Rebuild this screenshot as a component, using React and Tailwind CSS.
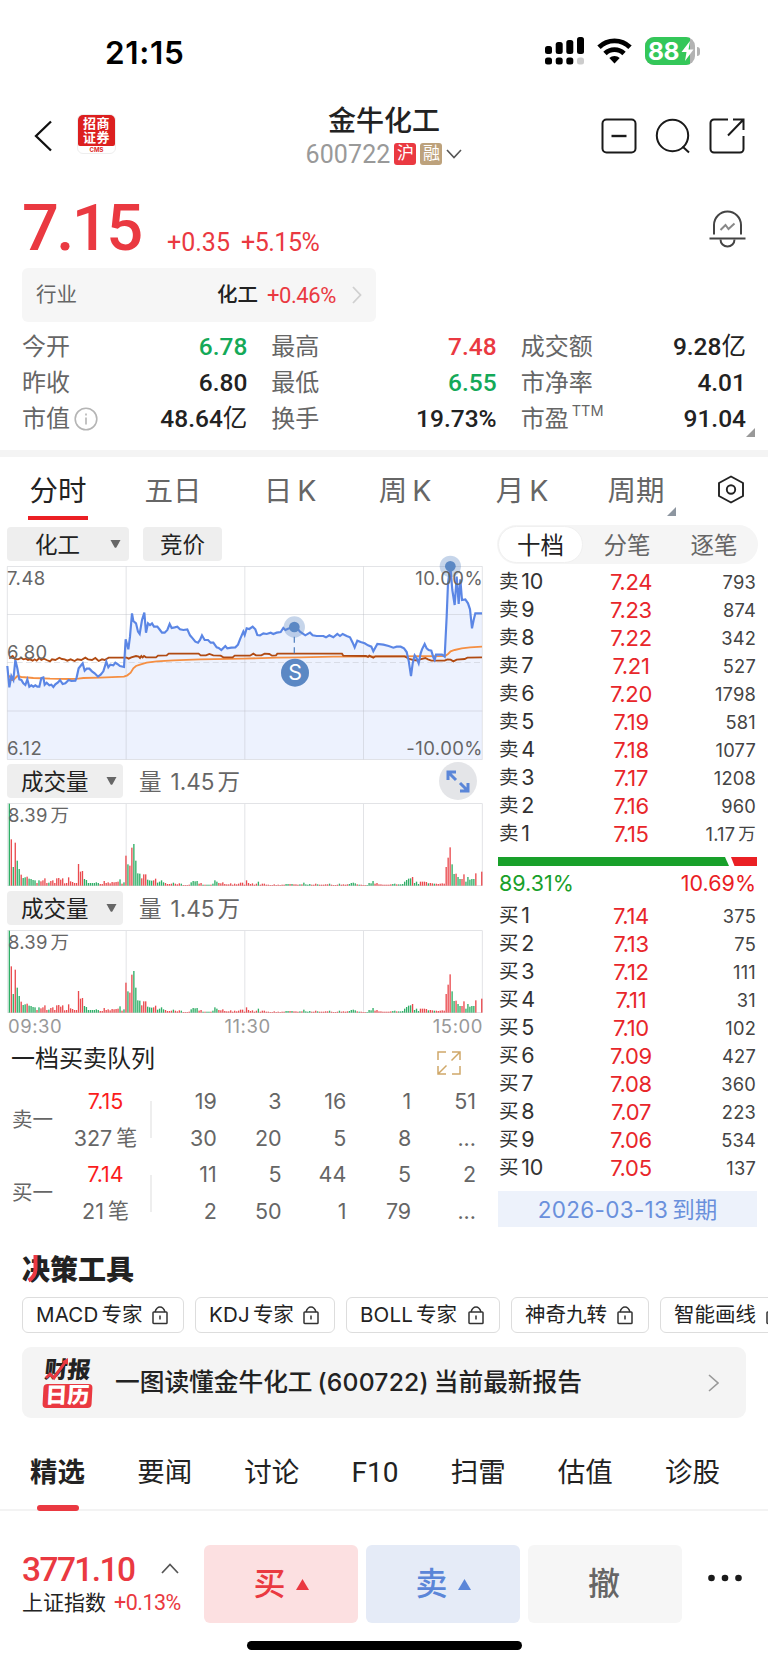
import { Fragment } from "react";

const sellOrders = [
  ["10", "7.24", "793"],
  ["9", "7.23", "874"],
  ["8", "7.22", "342"],
  ["7", "7.21", "527"],
  ["6", "7.20", "1798"],
  ["5", "7.19", "581"],
  ["4", "7.18", "1077"],
  ["3", "7.17", "1208"],
  ["2", "7.16", "960"],
  ["1", "7.15", "1.17", "万"],
];

const buyOrders = [
  ["1", "7.14", "375"],
  ["2", "7.13", "75"],
  ["3", "7.12", "111"],
  ["4", "7.11", "31"],
  ["5", "7.10", "102"],
  ["6", "7.09", "427"],
  ["7", "7.08", "360"],
  ["8", "7.07", "223"],
  ["9", "7.06", "534"],
  ["10", "7.05", "137"],
];

const pricePoints =
  "22,648 28,712 34,678 40,690 46,630 52,655 58,688 64,690 70,700 76,705 82,688 88,710 94,706 100,710 106,706 112,710 118,710 124,684 130,682 134,704 140,698 148,706 154,704 160,711 166,703 174,697 180,690 188,702 196,700 206,690 214,693 226,692 230,682 236,655 248,640 254,662 260,656 268,656 276,664 284,670 294,680 302,674 310,664 319,635 325,652 331,644 340,646 346,638 352,642 360,648 372,651 377,568 385,598 390,560 396,490 400,513 408,520 414,545 419,552 426,510 433,488 438,548 444,520 450,525 456,520 462,530 472,530 480,540 486,548 494,548 502,540 509,522 515,534 524,532 532,530 540,538 550,540 562,538 570,556 578,565 586,575 594,578 600,570 606,556 614,570 624,570 632,578 640,578 650,592 656,594 664,600 676,588 682,595 694,593 706,592 714,584 720,568 730,545 734,555 740,535 748,537 758,530 766,538 772,555 780,556 790,550 800,552 812,548 820,552 830,548 842,546 850,534 856,540 864,536 882,530 892,535 900,545 916,556 930,548 938,556 950,558 970,558 978,562 988,556 1000,562 1012,552 1020,558 1028,552 1040,558 1050,562 1058,578 1064,592 1072,572 1082,576 1094,580 1104,586 1114,590 1120,604 1132,582 1150,584 1166,588 1180,593 1190,590 1202,590 1212,595 1220,606 1226,632 1233,678 1238,640 1244,616 1250,625 1256,640 1262,610 1266,598 1274,582 1280,595 1286,600 1294,602 1300,622 1304,630 1308,614 1326,614 1334,620 1340,500 1344,400 1351,348 1357,420 1364,465 1370,380 1376,462 1381,388 1386,450 1396,448 1404,460 1410,478 1416,535 1421,510 1426,490 1446,490";

const avgPoints =
  "28,676 34,690 40,690 52,678 64,681 100,684 150,686 210,687 235,686 250,684 300,683 372,680 382,676 392,668 400,655 408,648 420,644 440,638 470,634 520,631 600,628 730,626 830,623 900,622 1000,620 1200,619 1335,618 1344,612 1352,604 1364,600 1385,595 1410,592 1446,590";

const industryPoints =
  "28,626 34,620 38,618 44,627 54,628 64,624 70,628 78,626 84,630 90,628 98,632 104,628 110,632 118,624 124,630 132,626 140,630 150,634 156,628 166,630 178,623 186,627 194,628 202,632 212,628 224,633 232,628 244,630 256,623 264,628 276,630 286,624 296,633 306,628 314,630 326,623 380,623 386,626 394,622 408,618 416,620 420,624 424,618 428,622 432,618 438,622 468,622 474,617 500,616 506,611 596,611 602,616 618,616 628,612 640,616 662,617 670,622 698,622 704,617 750,617 760,611 768,616 784,616 794,611 808,612 816,617 828,616 832,611 1026,611 1030,617 1098,618 1104,621 1108,617 1120,623 1126,619 1214,619 1228,627 1240,630 1254,632 1260,628 1276,624 1284,628 1294,632 1334,632 1342,628 1352,629 1360,634 1370,629 1394,627 1402,623 1446,622";

// one bar per minute, negative = falling minute
const volumes = [
  -246, 139, -56, 129, -75, -50, 33, -23, -25, 27, -21, -20, -17, -16, 8, -16, 13, 16, 22, 8,
  -9, 14, 16, 8, 22, 23, 18, 22, 7, 8, 25, 13, 11, 8, 8, 65, 42, 44, -20, -17,
  -8, -8, -8, -8, -10, -8, 5, 5, 14, 8, 10, 7, 11, 10, 11, 12, -19, 6, -10, 90,
  -64, 60, 114, -125, -75, -37, -36, 22, 34, 34, -18, -16, -15, 16, 21, -9, -12, -16, -10, 8,
  5, 5, 6, -9, 6, 4, 7, -6, 2, 2, 2, 3, -10, -14, -13, -14, 6, 8, -3, 3,
  -3, -3, 3, -6, -16, -12, 8, 7, 10, 5, 4, 4, 7, 3, 6, 4, 6, 9, 9, 3,
  16, 8, 5, 7, 3, 6, -12, 3, 6, 6, 3, 3, 2, 2, 4, 2, 3, 2, 3, 3,
  -5, -5, 5, -5, 4, 4, 3, -4, 4, -9, -4, -3, -5, 3, 3, 6, -4, 3, 3, 3,
  4, 4, -6, 3, 2, 2, 3, -6, 3, 4, 3, 4, -5, -8, -9, -7, 4, -3, 3, 2,
  2, -2, -8, -7, -14, 6, 8, 4, 4, 3, 3, 3, 3, 4, -5, -6, 4, -4, -4, -5,
  -12, -17, -21, -22, 26, -8, -12, -5, 12, 12, 12, 11, -7, 8, 7, -6, 6, 5, 6, 7,
  6, 56, 84, 115, -64, -35, 36, -26, -20, 20, 34, -12, -26, -18, -20, -20, 37, 0, 0, 42,
];

const Triangle = ({ className }) => (
  <svg viewBox="0 0 10 8" className={className} fill="currentColor">
    <path d="M0 0h10L6 7.2q-1 1-2 0z" />
  </svg>
);

const Corner = ({ className }) => (
  <svg viewBox="0 0 9 9" className={className} fill="currentColor">
    <path d="M9 0v9H0z" />
  </svg>
);

const Lock = () => (
  <svg viewBox="0 0 16 19" className="w-4 h-[19px] shrink-0" fill="none" stroke="#333" strokeWidth="1.5">
    <rect x="1" y="6" width="14" height="11.500" rx="0.800" />
    <path d="M3 6C4 2.800 5.800 1 8 1s4 1.800 5 5M8 9.500v4" />
  </svg>
);

function StatusBar() {
  return (
    <div className="h-[102px] flex items-center justify-between pl-[105px] pr-[68px]">
      <span className="text-[31.500px] font-semibold text-black tracking-[0.700px] leading-none mt-[3px]">21:15</span>
      <div className="flex items-center gap-[13px]">
        <svg width="39" height="28" viewBox="0 0 39 28">
          <rect x="0" y="9" width="7" height="8" rx="2.500" />
          <rect x="10.700" y="5" width="7" height="12" rx="2.500" />
          <rect x="21.300" y="3" width="7" height="14" rx="2.500" />
          <rect x="32" y="0" width="7" height="17" rx="2.500" />
          <rect x="0" y="20.500" width="7" height="7" rx="2.500" />
          <rect x="10.700" y="20.500" width="7" height="7" rx="2.500" />
          <rect x="21.300" y="20.500" width="7" height="7" rx="2.500" />
          <rect x="32" y="20.500" width="7" height="7" rx="2.500" fill="#ccc" />
        </svg>
        <svg width="35" height="26" viewBox="0 0 35 26" fill="none" stroke="#000" strokeWidth="4.800">
          <path d="M2 9.200a22 22 0 0 1 31 0" />
          <path d="M8 15.500a13.500 13.500 0 0 1 19 0" />
          <path d="M17.500 25.500l-5.200-5.400a7.500 7.500 0 0 1 10.400 0z" fill="#000" stroke="none" />
        </svg>
        <div className="flex items-center gap-[2px]">
          <div className="relative w-[50px] h-[28px] rounded-[9px] overflow-hidden bg-[#b3b3b3]">
            <div className="w-[45px] h-full bg-[#34c759] text-white font-bold text-[24.500px] leading-[28px] pl-[3px] tracking-[-0.500px]">88</div>
            <svg className="absolute right-px top-[4px]" width="13" height="20" viewBox="0 0 13 20" fill="#fff">
              <path d="M9 0L0.500 11H5.500L4 20l8.500-11.500H7.500z" />
            </svg>
          </div>
          <div className="w-[3px] h-[9px] rounded-r-full bg-[#b3b3b3]"></div>
        </div>
      </div>
    </div>
  );
}

function Header() {
  return (
    <div className="h-[68px] flex items-center pl-[34px] pr-[23px] text-[#222]">
      <div className="flex items-center gap-[24px] w-[240px]">
        <svg width="19" height="32" viewBox="0 0 19 32" fill="none" stroke="#111" strokeWidth="2.300">
          <path d="M17 1.500L2 16l15 14.500" />
        </svg>
        <div className="w-[39px] h-[40px] -mt-1 rounded-[6px] border border-[#eee] text-center">
          <div className="h-[31px] bg-[#dc1f1f] rounded-t-[5px] rounded-b-[2px] text-white text-[13px] font-bold font-['Noto_Sans_CJK_SC',sans-serif] pt-px">
            <div className="h-[14px] leading-[14px] tracking-[0.500px]">招商</div>
            <div className="h-[14px] leading-[14px] tracking-[0.500px]">证券</div>
          </div>
          <div className="text-[6px] leading-[7px] font-bold text-[#dc1f1f]">CMS</div>
        </div>
      </div>

      <div className="w-[220px] flex flex-col items-center">
        <div className="text-[28px] leading-[34px] font-medium mt-[2px]">金牛化工</div>
        <div className="flex items-center h-[32px] gap-1">
          <span className="font-['Roboto',sans-serif] text-[25px] text-[#999] leading-none tracking-[0.100px]">600722</span>
          <span className="w-[22px] h-[22px] rounded-[3px] bg-[#ea3941] text-white text-[17px] leading-[21px] text-center">沪</span>
          <span className="w-[22px] h-[22px] rounded-[3px] bg-[#bda27c] text-white text-[17px] leading-[21px] text-center">融</span>
          <svg width="16" height="10" viewBox="0 0 16 10" fill="none" stroke="#555" strokeWidth="1.600">
            <path d="M1 1l7 7.500L15 1" />
          </svg>
        </div>
      </div>

      <div className="ml-auto flex items-center gap-[18px]">
        <svg width="36" height="36" viewBox="0 0 36 36" fill="none" stroke="#1a1a1a" strokeWidth="2">
          <rect x="1.500" y="1.500" width="33" height="33" rx="4" />
          <path d="M10.500 18h15" strokeWidth="2.400" />
        </svg>
        <svg width="36" height="36" viewBox="0 0 36 36" fill="none" stroke="#1a1a1a" strokeWidth="2">
          <circle cx="17.500" cy="17.500" r="15.700" />
          <path d="M27.500 28.500l6.500 6" />
        </svg>
        <svg width="36" height="36" viewBox="0 0 36 36" fill="none" stroke="#1a1a1a" strokeWidth="2">
          <path d="M19 1.500H5a3.500 3.500 0 0 0-3.500 3.500v26A3.500 3.500 0 0 0 5 34.500h26a3.500 3.500 0 0 0 3.500-3.500V18" />
          <path d="M24 1.500h10.500V12M34 2L19 17.500" />
        </svg>
      </div>
    </div>
  );
}

function Stat({ label, value, unit, color = "text-[#222]", children }) {
  return (
    <div className="flex items-center justify-between h-9">
      <span className="flex items-center gap-1 text-[24px] text-[#666]">
        {label}
        {children}
      </span>
      <span className={`font-['Roboto','Noto_Sans_CJK_SC',sans-serif] font-medium text-[24.500px] ${color}`}>
        {value}
        {unit && <span className="font-normal">{unit}</span>}
      </span>
    </div>
  );
}

function Quote() {
  return (
    <div className="px-[22px]">
      <div className="h-[98px] flex items-start font-['Roboto',sans-serif] text-[#ea3941]">
        <span className="text-[65px] font-medium leading-none mt-[26px] w-[145px] tracking-[-2.600px]">7.15</span>
        <span className="text-[25px] leading-none mt-[60px] w-[74px]">+0.35</span>
        <span className="text-[25px] leading-none mt-[60px] tracking-[-0.500px]">+5.15%</span>
        <svg className="ml-auto mt-[40px]" width="37" height="38" viewBox="0 0 37 38" fill="none" stroke="#444" strokeWidth="2">
          <path d="M5 24.500V15a13.500 13.500 0 0 1 27 0v9.500M0.500 28.500h36" />
          <path d="M11.500 29.500a7 7 0 0 0 14 0" />
          <path d="M11.500 20l5-5 3 4 6-5.500" stroke="#888" />
        </svg>
      </div>

      <div className="w-[354px] h-[54px] rounded-[6px] bg-[#f6f6f6] flex items-center pl-[14px] pr-[14px]">
        <span className="text-[20.500px] text-[#666] mt-px">行业</span>
        <span className="ml-auto text-[20.500px] font-medium text-[#222] mt-px">化工</span>
        <span className="ml-[9px] font-['Roboto',sans-serif] text-[22px] text-[#ea3941] tracking-[-0.400px]">+0.46%</span>
        <svg className="ml-[16px]" width="10" height="18" viewBox="0 0 10 18" fill="none" stroke="#d0d0d0" strokeWidth="1.800">
          <path d="M1 1l7.500 8L1 17" />
        </svg>
      </div>

      <div className="relative mt-[7px] grid grid-cols-3 gap-x-6">
        <Stat label="今开" value="6.78" color="text-[#14a958]" />
        <Stat label="最高" value="7.48" color="text-[#ea3941]" />
        <Stat label="成交额" value="9.28" unit="亿" />
        <Stat label="昨收" value="6.80" />
        <Stat label="最低" value="6.55" color="text-[#14a958]" />
        <Stat label="市净率" value="4.01" />
        <Stat label="市值" value="48.64" unit="亿">
          <svg width="24" height="24" viewBox="0 0 24 24" fill="none" stroke="#b5b5b5" strokeWidth="1.600">
            <circle cx="12" cy="12" r="10.800" />
            <path d="M12 10.500v7M12 6.500v2" />
          </svg>
        </Stat>
        <Stat label="换手" value="19.73%" />
        <Stat label="市盈" value="91.04">
          <span className="text-[14.500px] -mt-4 -ml-px">TTM</span>
        </Stat>
        <Corner className="absolute -right-[9px] bottom-0 w-[9px] h-[9px] text-[#999]" />
      </div>
    </div>
  );
}

function PeriodTabs() {
  return (
    <div className="h-[66px] flex items-center text-[28.500px] text-[#666] pt-[2px]">
      <div className="relative w-[116px] h-full flex items-center justify-center text-[#222]">
        <span>分时</span>
        <div className="absolute bottom-[3px] left-[28px] w-[60px] h-1 bg-[#eb1f24]"></div>
      </div>
      <div className="w-[114px] text-center">五日</div>
      <div className="w-[120px] flex justify-center gap-[5px]">日<span>K</span></div>
      <div className="w-[110px] flex justify-center gap-[5px]">周<span>K</span></div>
      <div className="w-[124px] flex justify-center gap-[5px]">月<span>K</span></div>
      <div className="relative w-[104px] text-center">
        周期
        <Corner className="absolute right-[12px] -bottom-[4px] w-[9px] h-[9px] text-[#8d96a0]" />
      </div>
      <svg className="ml-[29px] -mt-[3px]" width="28" height="29" viewBox="0 0 28 29" fill="none" stroke="#222" strokeWidth="1.900" strokeLinejoin="round">
        <path d="M14 1.500l12 6.500v13L14 27.500 2 21V8z" />
        <circle cx="14" cy="14.500" r="4.200" />
      </svg>
    </div>
  );
}

function PriceChart() {
  return (
    <div className="relative mt-[5px] w-[476px] h-[194px] text-[18.500px] text-[#666]">
      <svg width="476" height="194" viewBox="21 348 1428 582" className="overflow-visible block" fill="none">
        <path d={`M22,928 L${pricePoints} L1446,928z`} fill="#edf2fe" />
        <g stroke="#b8bcc4" strokeOpacity="0.400" strokeWidth="3">
          <path d="M22 349.500h1425v579H22zM378.500 350v578M734.500 350v578M1090.500 350v578" />
          <path d="M22 493.500h1425M22 783h1425" />
          <path d="M22 637.500h1425" strokeDasharray="18 10" />
        </g>
        <polyline points={avgPoints} stroke="#f58f43" strokeWidth="5.500" />
        <polyline points={industryPoints} stroke="#b04a12" strokeWidth="5.500" />
        <polyline points={pricePoints} stroke="#5b86e5" strokeWidth="6.500" />
        <path d="M883 560v55" stroke="#5b88c4" strokeWidth="4" strokeDasharray="18 14" />
        <circle cx="883" cy="531" r="32" fill="#5b88c4" fillOpacity="0.350" />
        <circle cx="883" cy="531" r="16" fill="#5b88c4" />
        <circle cx="1351" cy="349" r="32" fill="#5b88c4" fillOpacity="0.350" />
        <circle cx="1351" cy="349" r="16" fill="#5b88c4" />
        <circle cx="885" cy="668" r="42" fill="#5b88c4" />
        <text x="885" y="690" textAnchor="middle" fontSize="64" fontWeight="400" fill="#fff">S</text>
      </svg>
      <div className="absolute inset-0 leading-[22px] tracking-[0.450px]">
        <div className="absolute left-0 top-px">7.48</div>
        <div className="absolute right-0 top-px">10.00%</div>
        <div className="absolute left-0 top-[75px]">6.80</div>
        <div className="absolute left-0 bottom-px">6.12</div>
        <div className="absolute right-0 bottom-px">-10.00%</div>
      </div>
    </div>
  );
}

function VolumeChart({ expand }) {
  return (
    <>
      <div className="h-[34px] flex items-center text-[22.500px] mt-1">
        <div className="w-[116px] h-full rounded-[4px] bg-[#eee] text-[#222] flex items-center pl-[14px] pt-px">
          成交量
          <Triangle className="ml-[17px] w-[11px] h-2 text-[#666] -mt-px" />
        </div>
        <span className="ml-[16px] mt-px text-[#666]">量</span>
        <span className="ml-[9px] mt-px flex gap-[3px] text-[#666]">1.45<span>万</span></span>
        {expand && (
          <svg className="ml-auto mr-[13px]" width="38" height="38" viewBox="0 0 38 38">
            <circle cx="19" cy="19" r="19" fill="#e4e5e8" />
            <g fill="none" stroke="#5b86d8" strokeWidth="3">
              <path d="M9 18V10h8M10 11l7 7M29 21v8h-8M28 28l-7-7" />
            </g>
          </svg>
        )}
      </div>
      <div className="relative mt-[5px] w-[476px] h-[83px]">
        <svg width="476" height="83" viewBox="21 160 1428 249" className="block" fill="none">
          <path d="M22 161.500h1425v246H22zM378.500 161v246M734.500 161v246M1090.500 161v246" stroke="#e2e3e6" strokeWidth="3" />
          {volumes.map((v, i) => (
            <rect
              key={i}
              x={26 + i * 5.93}
              y={408 - Math.abs(v)}
              width="4"
              height={Math.abs(v)}
              fill={v < 0 ? "#2fae66" : "#ea4a4e"}
            />
          ))}
        </svg>
        <div className="absolute left-px top-px flex gap-[3px] text-[18.500px] leading-[22px] text-[#666] tracking-[0.200px]">
          8.39<span>万</span>
        </div>
      </div>
    </>
  );
}

function Queue() {
  const groups = [
    { name: "卖一", price: "7.15", count: "327", rows: [["19", "3", "16", "1", "51"], ["30", "20", "5", "8", "..."]] },
    { name: "买一", price: "7.14", count: "21", rows: [["11", "5", "44", "5", "2"], ["2", "50", "1", "79", "..."]] },
  ];

  return (
    <div className="text-[21.500px] text-[#666]">
      <div className="h-[43px] flex items-center pl-1 pr-[29px] pb-[6px] justify-between">
        <span className="text-[24px] text-[#222] pt-px">一档买卖队列</span>
        <svg className="mt-[9px]" width="24" height="24" viewBox="0 0 24 24" fill="none" stroke="#d0a869" strokeWidth="1.500">
          <path d="M1 9V1h8M15 1h8v8M22.500 1.500l-8 8M1 15v8h8M1.500 22.500l8-8M23 15v8h-8" />
        </svg>
      </div>
      {groups.map((g) => (
        <div key={g.name} className="flex h-[73.500px] items-center">
          <div className="w-[54px] pl-[5px] pt-px text-[20.500px]">{g.name}</div>
          <div className="w-[89px] text-center leading-[36.800px]">
            <div className="text-[#fb1c1c]">{g.price}</div>
            <div className="flex justify-center gap-1">{g.count}<span className="text-[21px]">笔</span></div>
          </div>
          <div className="w-[2px] h-[37px] bg-[#eee]"></div>
          <div className="grid grid-cols-5 w-[324px] leading-[36.800px] text-right">
            {g.rows.map((row, i) => (
              <Fragment key={i}>
                {row.map((n, j) => (
                  <div key={j}>{n}</div>
                ))}
              </Fragment>
            ))}
          </div>
        </div>
      ))}
    </div>
  );
}

function Orders({ side, orders }) {
  return orders.map(([level, price, volume, unit]) => (
    <div key={side + level} className="grid grid-cols-[84px_96px_1fr] h-7 items-center px-[1px] leading-none">
      <div className="flex items-center gap-[3px] text-[21.500px] tracking-[-0.300px] text-[#333]">
        <span className="text-[19.500px]">{side}</span>
        {level}
      </div>
      <div className="text-center text-[22px] tracking-[-0.300px] text-[#e8262a]">{price}</div>
      <div className="flex justify-end gap-[3px] text-[18.300px] tracking-[0.200px] text-[#444]">
        {volume}
        {unit && <span className="text-[17.500px]">{unit}</span>}
      </div>
    </div>
  ));
}

function OrderBook() {
  return (
    <div className="w-[261px] ml-[7px] pt-[2px]">
      <div className="h-[39px] rounded-full bg-[#f5f5f5] p-[1px] flex text-[23.500px] leading-[39px] text-[#666] text-center">
        <div className="w-[85px] rounded-full bg-white text-[#222] border border-[#f0f0f0] leading-[37px]">十档</div>
        <div className="w-[88px]">分笔</div>
        <div className="w-[86px]">逐笔</div>
      </div>
      <div className="px-[1px]">
        <div className="pt-1">
          <Orders side="卖" orders={sellOrders} />
        </div>
        <svg className="mt-[9px] block" width="259" height="9" viewBox="0 0 259 9">
          <path d="M0 0h227l4 9H0z" fill="#18a02a" />
          <path d="M233 0h26v9h-22.500z" fill="#ea2024" />
        </svg>
        <div className="h-[36px] flex justify-between px-px pt-[3px] text-[21.500px] leading-[28px]">
          <span className="text-[#18a02a]">89.31%</span>
          <span className="text-[#ea2024]">10.69%</span>
        </div>
        <Orders side="买" orders={buyOrders} />
        <div className="mt-[9px] h-9 bg-[#edf2fb] flex justify-center gap-1 text-[22.500px] leading-[37px] text-[#6a90dc] tracking-[0.300px]">
          2026-03-13<span className="tracking-normal">到期</span>
        </div>
      </div>
    </div>
  );
}

function Tools() {
  const tools = [
    ["MACD", "专家", "w-[162px]"],
    ["KDJ", "专家", "w-[140px]"],
    ["BOLL", "专家", "w-[154px]"],
    ["", "神奇九转", "w-[138px]"],
    ["", "智能画线", "w-[138px]"],
  ];

  return (
    <div className="pl-[22px]">
      <div className="relative h-[57px] pt-[13px] text-[28px] leading-[34px] font-black text-[#222]">
        决策工具
        <svg className="absolute left-[5px] top-[15px]" width="12" height="28" viewBox="0 0 12 28" fill="none" stroke="#ea3941" strokeWidth="4">
          <path d="M8.500 0v13q0 9-7 12.500" />
        </svg>
      </div>
      <div className="flex gap-[11px]">
        {tools.map(([code, name, width]) => (
          <div
            key={code + name}
            className={`${width} shrink-0 h-[36px] border-[1.500px] border-[#ddd] rounded-[6px] pl-[13px] pr-[15px] flex items-center text-[20.500px] text-[#222] whitespace-nowrap`}
          >
            {code && <span className="mr-[3px] tracking-[0.200px]">{code}</span>}
            <span className="mr-auto">{name}</span>
            <Lock />
          </div>
        ))}
      </div>
      <div className="mt-[14px] w-[724px] h-[71px] rounded-[9px] bg-[#f4f4f4] flex items-center pl-[21px] pr-[27px]">
        <div className="relative w-[49px] text-center leading-none font-black">
          <div className="text-[23px] h-[26px] leading-[24px] -skew-x-6 text-[#222]">财报</div>
          <div className="h-[24px] rounded-[4px] bg-[#ea3941] text-white text-[22px] leading-[23px] -skew-x-3">日历</div>
          <svg className="absolute left-[2px] top-0" width="26" height="24" viewBox="0 0 26 24" fill="none" stroke="#ea3941" strokeWidth="3">
            <path d="M1 20l4-4 4 4L21 3" />
            <path d="M17 3.500l6-3.500v7z" fill="#ea3941" stroke="none" />
          </svg>
        </div>
        <span className="ml-[23px] mt-px flex gap-[5px] text-[24.700px] font-medium text-[#222]">
          一图读懂金牛化工<span className="tracking-[0.200px]">(600722)</span><span>当前最新报告</span>
        </span>
        <svg className="ml-auto" width="11" height="18" viewBox="0 0 11 18" fill="none" stroke="#999" strokeWidth="1.600">
          <path d="M1 1l9 8-9 8" />
        </svg>
      </div>
    </div>
  );
}

function Footer() {
  return (
    <>
      <div className="relative h-[93px] border-b-2 border-[#f3f3f3] flex items-center justify-between pl-[30px] pr-[48px] pt-[19px] text-[27.500px] text-[#222]">
        <span className="font-bold">精选</span>
        <span>要闻</span>
        <span>讨论</span>
        <span className="font-['Roboto',sans-serif] text-[28px]">F10</span>
        <span>扫雷</span>
        <span>估值</span>
        <span>诊股</span>
        <div className="absolute left-[37px] -bottom-[2px] w-[42px] h-[6px] rounded-full bg-[#ea3941]"></div>
      </div>

      <div className="pt-[34px] flex gap-2 pl-[22px]">
        <div className="w-[174px] h-[78px] pt-[7px]">
          <div className="flex items-center h-[36px]">
            <span className="w-[139px] font-['Roboto',sans-serif] font-medium text-[33.500px] tracking-[-1.600px] text-[#ea3941]">3771.10</span>
            <svg className="-mt-[3px]" width="18" height="11" viewBox="0 0 18 11" fill="none" stroke="#555" strokeWidth="1.700">
              <path d="M1 10l8-8.500 8 8.500" />
            </svg>
          </div>
          <div className="flex items-center gap-[8px] h-[30px] text-[21px] text-[#222]">
            上证指数
            <span className="font-['Roboto',sans-serif] text-[21.500px] tracking-[-0.500px] text-[#ea3941]">+0.13%</span>
          </div>
        </div>
        <div className="w-[154px] h-[78px] rounded-[6px] bg-[#fce0e1] text-[#ea3941] flex items-center justify-center gap-[10px] text-[32px] font-medium">
          买
          <svg width="13" height="11" viewBox="0 0 13 11" fill="currentColor"><path d="M6.500 0L13 11H0z" /></svg>
        </div>
        <div className="w-[154px] h-[78px] rounded-[6px] bg-[#e5ebf7] text-[#5b86d8] flex items-center justify-center gap-[10px] text-[32px] font-medium">
          卖
          <svg width="13" height="11" viewBox="0 0 13 11" fill="currentColor"><path d="M6.500 0L13 11H0z" /></svg>
        </div>
        <div className="w-[154px] h-[78px] rounded-[6px] bg-[#f6f6f6] text-[#666] flex items-center justify-center text-[32px] font-medium pr-[2px]">撤</div>
        <svg className="ml-[18px] mt-[29px]" width="34" height="8" viewBox="0 0 34 8" fill="#1a1a1a">
          <circle cx="3.500" cy="4" r="3.300" />
          <circle cx="17" cy="4" r="3.300" />
          <circle cx="30.500" cy="4" r="3.300" />
        </svg>
      </div>
      <div className="mt-[18px] mx-auto w-[275px] h-[9px] rounded-full bg-black"></div>
    </>
  );
}

function App() {
  return (
    <div className="w-[768px] h-[1665px] overflow-hidden bg-white font-['Inter','Noto_Sans_CJK_SC',sans-serif]">
      <StatusBar />
      <Header />
      <Quote />
      <div className="mt-[13px] h-[7px] bg-[#f4f4f4]"></div>
      <PeriodTabs />

      <div className="flex h-[717px]">
        <div className="w-[490px] pl-[7px] pt-1">
          <div className="flex gap-[14px] h-[34px] text-[22.500px] text-[#222]">
            <div className="w-[122px] rounded-[4px] bg-[#eee] flex items-center justify-between pl-[28px] pr-2 pt-px">
              化工
              <Triangle className="w-[11px] h-2 text-[#666] -mt-[2px]" />
            </div>
            <div className="w-[79px] rounded-[4px] bg-[#eee] flex items-center justify-center pt-px">竞价</div>
          </div>
          <PriceChart />
          <VolumeChart expand />
          <div className="h-px"></div>
          <VolumeChart />
          <div className="w-[476px] h-[27px] flex justify-between pl-px text-[18.500px] leading-[27px] text-[#999] tracking-[0.550px]">
            <span>09:30</span>
            <span>11:30</span>
            <span>15:00</span>
          </div>
          <Queue />
        </div>
        <OrderBook />
      </div>

      <Tools />
      <Footer />
    </div>
  );
}

export default App;
